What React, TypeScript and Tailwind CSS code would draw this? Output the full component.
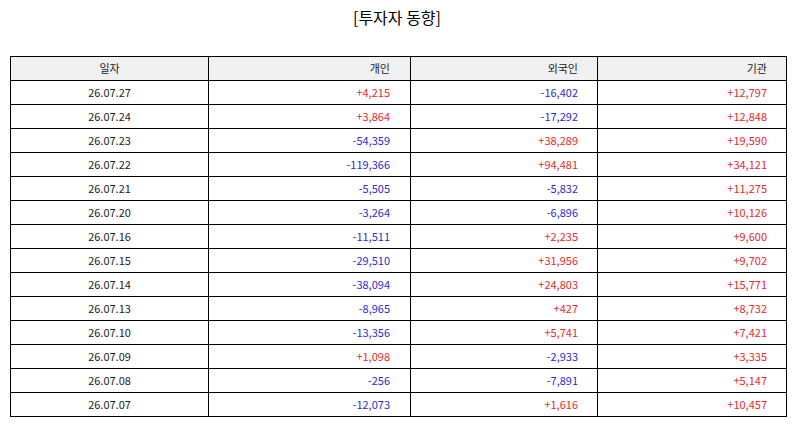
const rows: [string, string, string, string][] = [
  ['26.07.27', '+4,215', '-16,402', '+12,797'],
  ['26.07.24', '+3,864', '-17,292', '+12,848'],
  ['26.07.23', '-54,359', '+38,289', '+19,590'],
  ['26.07.22', '-119,366', '+94,481', '+34,121'],
  ['26.07.21', '-5,505', '-5,832', '+11,275'],
  ['26.07.20', '-3,264', '-6,896', '+10,126'],
  ['26.07.16', '-11,511', '+2,235', '+9,600'],
  ['26.07.15', '-29,510', '+31,956', '+9,702'],
  ['26.07.14', '-38,094', '+24,803', '+15,771'],
  ['26.07.13', '-8,965', '+427', '+8,732'],
  ['26.07.10', '-13,356', '+5,741', '+7,421'],
  ['26.07.09', '+1,098', '-2,933', '+3,335'],
  ['26.07.08', '-256', '-7,891', '+5,147'],
  ['26.07.07', '-12,073', '+1,616', '+10,457'],
];

function tone(v: string) {
  return v.startsWith('+') ? 'text-[#e8282b]' : 'text-[#2b2bd0]';
}

export default function App() {
  return (
    <div
      className="w-[794px] h-[425px] bg-white text-[#222]"
      style={{ fontFamily: '"Noto Sans CJK KR", "DejaVu Sans", sans-serif' }}
    >
      {/* Title */}
      <div className="h-[36px] pt-[5px] text-center text-[16px] leading-[24px] text-black">
        [투자자 동향]
      </div>

      {/* Table */}
      <div className="pl-[10px] pt-[20px]">
        <table className="border-collapse table-fixed w-[776px] text-[11px]">
          <colgroup>
            <col className="w-[198px]" />
            <col className="w-[202px]" />
            <col className="w-[187px]" />
            <col className="w-[189px]" />
          </colgroup>
          <thead>
            <tr className="h-[24px] bg-[#f0f0f0]">
              <th className="border border-black font-normal text-center">일자</th>
              <th className="border border-black font-normal text-right pr-[20px]">개인</th>
              <th className="border border-black font-normal text-right pr-[19px]">외국인</th>
              <th className="border border-black font-normal text-right pr-[19px]">기관</th>
            </tr>
          </thead>
          <tbody>
            {rows.map(([d, a, b, c]) => (
              <tr key={d} className="h-[24px]">
                <td className="border border-black text-center p-0">{d}</td>
                <td className={`border border-black text-right p-0 pr-[20px] ${tone(a)}`}>{a}</td>
                <td className={`border border-black text-right p-0 pr-[19px] ${tone(b)}`}>{b}</td>
                <td className={`border border-black text-right p-0 pr-[19px] ${tone(c)}`}>{c}</td>
              </tr>
            ))}
          </tbody>
        </table>
      </div>
    </div>
  );
}
